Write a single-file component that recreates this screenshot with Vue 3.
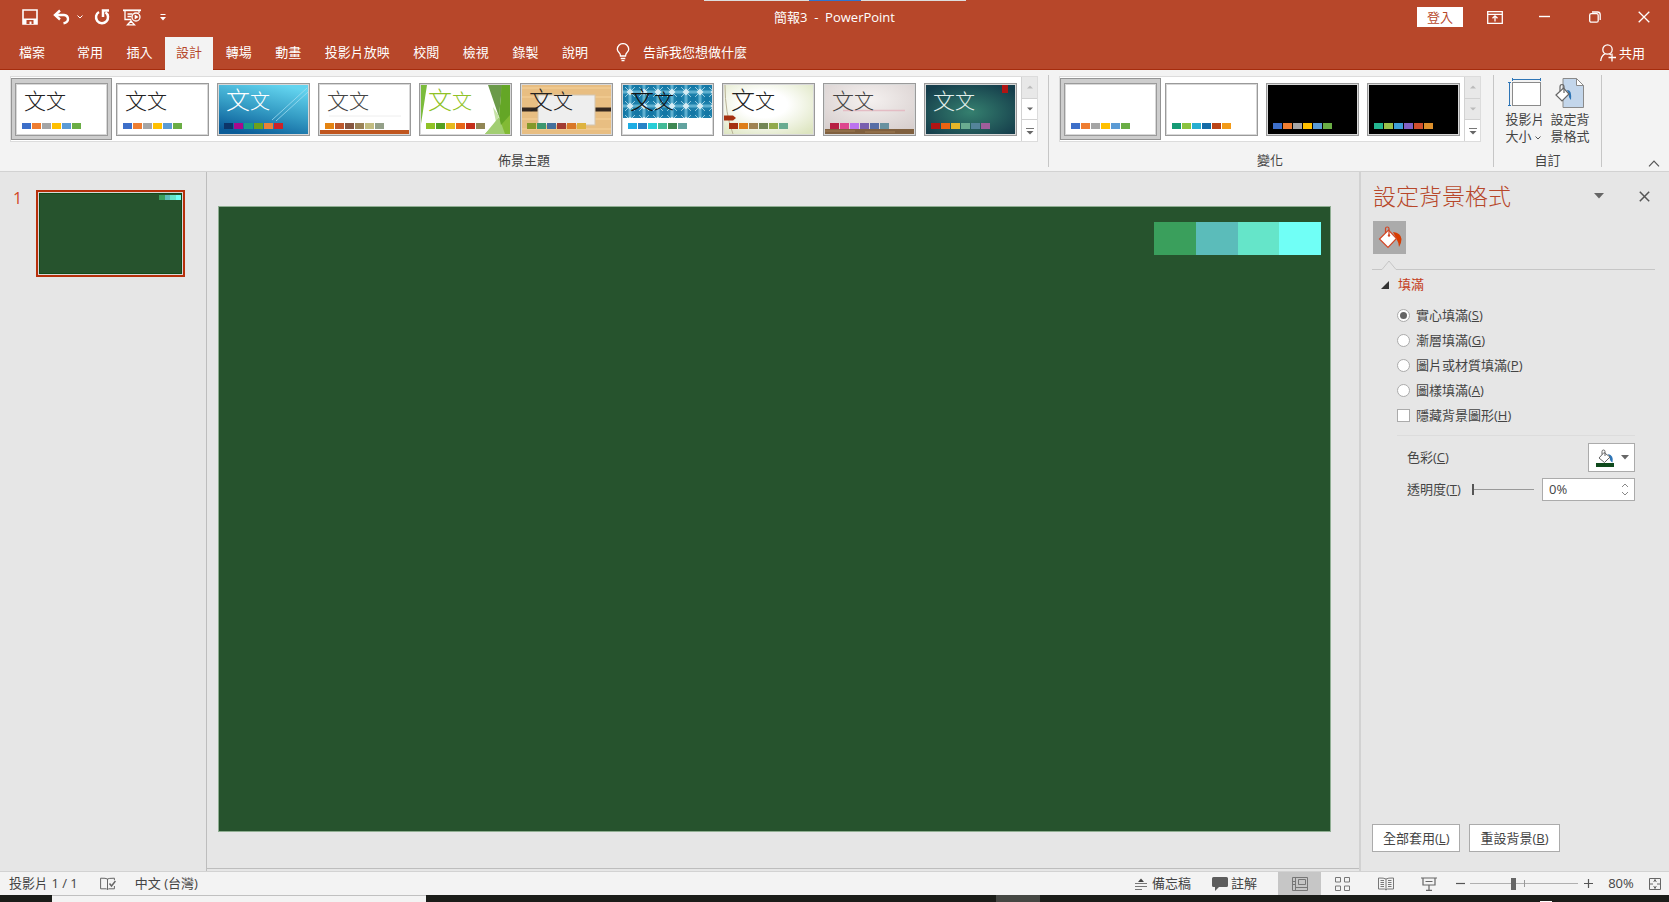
<script setup>
import { ref } from 'vue'

const tabs = ['常用', '插入', '設計', '轉場', '動畫', '投影片放映', '校閱', '檢視', '錄製', '說明']
const activeTab = ref('設計')

const office = ['#3d6fc9', '#ee7d31', '#a5a5a5', '#ffc000', '#5b9bd5', '#6aad45']
const themes = [
  { id: 'plain', ink: '#222', colors: office },
  { id: 'office', ink: '#222', colors: office },
  { id: 'blue', ink: '#fff', strong: true, colors: ['#0d3568', '#a80a8c', '#1a9c86', '#6da01c', '#ea8138', '#cc2229'] },
  { id: 'retro', ink: '#444', colors: ['#e48312', '#bd582c', '#865640', '#9b8357', '#c2bc80', '#94a088'] },
  { id: 'facet', ink: '#90c226', strong: true, colors: ['#90c226', '#54a021', '#e6b91e', '#e76618', '#c42f1a', '#918655'] },
  { id: 'wood', ink: '#222', strong: true, colors: ['#83992a', '#3c9770', '#44709d', '#a23c33', '#d97828', '#deb340'] },
  { id: 'tiles', ink: '#111', strong: true, colors: ['#1cade4', '#2683c6', '#27ced7', '#42ba97', '#3e8853', '#62a39f'] },
  { id: 'wisp', ink: '#222', strong: true, colors: ['#a53010', '#de7e18', '#9f8351', '#728653', '#92aa4c', '#6aac91'] },
  { id: 'gallery', ink: '#444', colors: ['#b71e42', '#de478e', '#bc72f0', '#795faf', '#586ea6', '#6892a0'] },
  { id: 'ion', ink: '#e3efec', colors: ['#b01513', '#ea6312', '#e6b729', '#6aac90', '#54849a', '#9e5e9b'] }
]
const selectedTheme = ref(0)

const variants = [
  { id: 'light', colors: office },
  { id: 'light', colors: ['#159a74', '#8ac33f', '#26aed0', '#136ba8', '#ba4316', '#f39a17'] },
  { id: 'dark', colors: office },
  { id: 'dark', colors: ['#23b590', '#9cc049', '#3f9fd8', '#8261c4', '#d04f2e', '#dd902c'] }
]
const selectedVariant = ref(0)

const slideColors = ['#3a9f5c', '#5bbcba', '#65e5c9', '#70fff6']

const fills = [
  { id: 'solid', label: '實心填滿', key: 'S' },
  { id: 'gradient', label: '漸層填滿', key: 'G' },
  { id: 'picture', label: '圖片或材質填滿', key: 'P' },
  { id: 'pattern', label: '圖樣填滿', key: 'A' }
]
const fill = ref('solid')
const hideShapes = ref(false)
const transparency = ref(0)
const zoom = ref(40)
</script>

<template>
  <div class="app">
    <header class="titlebar">
      <div class="quick">
        <button class="icon-btn save" aria-label="儲存">
          <svg width="16" height="16" viewBox="0 0 16 16"><path d="M1 1h14v14H1z" fill="none" stroke="#fff" stroke-width="1.6" /><path d="M1 9.5h14V15H1z" fill="#fff" /><path d="M4.500 11h7v4h-2v-2.500h-2V15h-3z" fill="#b7472a" /></svg>
        </button>
        <button class="icon-btn undo" aria-label="復原">
          <svg width="17" height="16" viewBox="0 0 17 16"><path d="M2 6h9q4 .5 4 4t-4.500 4.300" fill="none" stroke="#fff" stroke-width="2.400" /><path d="M7 1.500L2 6l5 4.500" fill="none" stroke="#fff" stroke-width="2.400" /></svg>
        </button>
        <button class="icon-btn undo-menu" aria-label="復原清單">
          <svg width="6" height="4" viewBox="0 0 6 4"><path d="M.5.5L3 3 5.500.5" fill="none" stroke="#fff" /></svg>
        </button>
        <button class="icon-btn redo" aria-label="重複">
          <svg width="16" height="16" viewBox="0 0 16 16"><path d="M5 3A6 6 0 1 0 11.500 3.300" fill="none" stroke="#fff" stroke-width="2.500" /><path d="M9 8V1.500h6" fill="none" stroke="#fff" stroke-width="2.500" /></svg>
        </button>
        <button class="icon-btn show" aria-label="從首張投影片">
          <svg width="18" height="17" viewBox="0 0 18 17"><g fill="none" stroke="#fff" stroke-width="1.300"><path d="M0 1.300h18" stroke-width="1.800" /><path d="M2 2v8.500h6M16 2v2M4.500 5h5M4.500 7.500h4" /><circle cx="13" cy="8" r="4" /><path d="M8 10.500V13M4.500 15.800L8 12l3.500 3.800z" /></g><path d="M11.700 5.500l3.800 2.500-3.800 2.500z" fill="#fff" /></svg>
        </button>
        <button class="icon-btn customize" aria-label="自訂快速存取工具列">
          <svg width="6" height="8" viewBox="0 0 6 8"><path d="M.5 1.500h5" stroke="#fff" /><path d="M0 4h6L3 7.500z" fill="#fff" /></svg>
        </button>
      </div>
      <h1>簡報3&nbsp; -&nbsp; PowerPoint</h1>
      <div class="window">
        <button class="signin">登入</button>
        <button class="icon-btn wb wopt" aria-label="功能區顯示選項">
          <svg width="16" height="13" viewBox="0 0 16 13"><g fill="none" stroke="#fff"><path d="M.7.700h14.600v11.600H.700zM1 3.300h14" stroke-width="1.300" /><path d="M8 10.500V5M5.500 7.300L8 4.800l2.500 2.500" stroke-width="1.300" /></g></svg>
        </button>
        <button class="icon-btn wb wmin" aria-label="最小化">
          <svg width="12" height="12" viewBox="0 0 12 12"><path d="M0 5.500h11" stroke="#fff" stroke-width="1.400" /></svg>
        </button>
        <button class="icon-btn wb wres" aria-label="還原">
          <svg width="12" height="12" viewBox="0 0 12 12"><g fill="none" stroke="#fff" stroke-width="1.300"><rect x=".7" y="2.700" width="8.500" height="8.500" rx="1.500" /><path d="M3 1h5.500q2.700 0 2.700 2.700V9" /></g></svg>
        </button>
        <button class="icon-btn wb wclose" aria-label="關閉">
          <svg width="12" height="12" viewBox="0 0 12 12"><path d="M.7.700l10.600 10.600M11.300.700L.700 11.300" stroke="#fff" stroke-width="1.300" /></svg>
        </button>
      </div>
      <div class="peek"></div>
    </header>

    <nav class="tabbar">
      <button class="tab file">檔案</button>
      <div class="tabs">
        <button v-for="t in tabs" :key="t" class="tab" :class="{ active: t === activeTab }" @click="activeTab = t">{{ t }}</button>
      </div>
      <button class="tell">
        <svg width="14" height="19" viewBox="0 0 14 19"><g fill="none" stroke="#fff" stroke-width="1.300"><path d="M4.500 13q0-2-1.700-3.700A5.500 5.500 0 0 1 1.300 6.300a5.700 5.700 0 0 1 11.400 0q0 1.700-1.500 3T9.500 13z" /><path d="M4.700 15.500h4.600M5.500 17.700h3" /></g></svg>
        <span>告訴我您想做什麼</span>
      </button>
      <button class="share">
        <svg width="16" height="18" viewBox="0 0 16 18"><g fill="none" stroke="#fff" stroke-width="1.300"><circle cx="7.500" cy="5.500" r="4.700" /><path d="M.7 17q.5-5 4.300-7.200M9.500 10l1.500 1M12 9.500v8M8.500 13.500h7.500" /></g></svg>
        <span>共用</span>
      </button>
    </nav>

    <section class="ribbon">
      <div class="group themes">
        <div class="gallery">
          <button v-for="(t, i) in themes" :key="t.id" class="slot" :class="{ selected: i === selectedTheme }" :aria-label="'佈景主題 ' + (i + 1)" @click="selectedTheme = i">
            <span class="thumb">
              <svg v-if="t.id === 'blue'" class="art" viewBox="0 0 89 49"><defs><linearGradient id="gb" x1=".7" y1="0" x2=".3" y2="1"><stop offset="0" stop-color="#63d4ef" /><stop offset=".5" stop-color="#359dc5" /><stop offset="1" stop-color="#0a5c98" /></linearGradient></defs><rect width="89" height="49" fill="url(#gb)" /><path d="M88 3L53 35M89 7L57 36" stroke="#9fdcf0" stroke-width=".8" /></svg>
              <svg v-else-if="t.id === 'retro'" class="art" viewBox="0 0 89 49"><path d="M9 31h72" stroke="#eee" /><rect y="45" width="89" height="4" fill="#c0561f" /></svg>
              <svg v-else-if="t.id === 'facet'" class="art" viewBox="0 0 89 49"><path d="M0 0h6L0 39z" fill="#7bbb3c" /><path d="M80 0h9v49H64l16-16z" fill="#82ba35" /><path d="M67 0h14l-3 32z" fill="#6b9a4a" /><path d="M72 22l6 9-3 6z" fill="#c5e2a6" /><path d="M64 49l14-17 6 17z" fill="#a2ce73" /><path d="M81 0h8v30l-9 10-2-9z" fill="#64a626" /></svg>
              <svg v-else-if="t.id === 'wood'" class="art" viewBox="0 0 89 49"><rect width="89" height="49" fill="#e8be82" /><path d="M0 3h89M0 12h89M0 34h89M0 44h89" stroke="#efc88e" stroke-width="2" /><path d="M0 24.500h89" stroke="#342820" stroke-width="4" /><rect x="16" y="10" width="57" height="30" fill="#eee" stroke="#d3c5b0" /></svg>
              <svg v-else-if="t.id === 'tiles'" class="art" viewBox="0 0 89 49"><defs><pattern id="pt" width="14" height="14" patternUnits="userSpaceOnUse"><rect width="14" height="14" fill="#1c7fab" /><path d="M7 0v14M0 7h14" stroke="#5fb0d0" stroke-width="3" /><path d="M0 0l14 14M14 0L0 14" stroke="#9ccfe2" stroke-width="1" /><path d="M7 3.500L10.500 7 7 10.500 3.500 7z" fill="#d5ecf4" /><circle cx="0" cy="0" r="3" fill="#1477a5" /><circle cx="14" cy="0" r="3" fill="#1477a5" /><circle cx="0" cy="14" r="3" fill="#1477a5" /><circle cx="14" cy="14" r="3" fill="#1477a5" /></pattern></defs><rect width="89" height="33" fill="url(#pt)" /></svg>
              <svg v-else-if="t.id === 'wisp'" class="art" viewBox="0 0 89 49"><defs><radialGradient id="gw" cx=".45" cy=".4" r=".75"><stop offset=".35" stop-color="#fff" /><stop offset="1" stop-color="#dde5c0" /></radialGradient></defs><rect width="89" height="49" fill="url(#gw)" /><path d="M1 0q0 28 8 49" fill="none" stroke="#b9b397" /><path d="M0 30.500h9l3 2.500-3 2.500H0z" fill="#a53010" /></svg>
              <svg v-else-if="t.id === 'gallery'" class="art" viewBox="0 0 89 49"><defs><radialGradient id="gg" cx=".5" cy=".3" r=".8"><stop offset="0" stop-color="#f5f1f0" /><stop offset="1" stop-color="#d5cccb" /></radialGradient></defs><rect width="89" height="49" fill="url(#gg)" /><path d="M18 25.500h62" stroke="#e4bcc4" stroke-width="1.500" /><rect y="44" width="89" height="5" fill="#80603f" /><path d="M0 46h30M40 47h30" stroke="#a07c54" /></svg>
              <svg v-else-if="t.id === 'ion'" class="art" viewBox="0 0 89 49"><defs><radialGradient id="gi" cx=".5" cy=".55" r=".65"><stop offset="0" stop-color="#35806f" /><stop offset="1" stop-color="#153d4b" /></radialGradient></defs><rect width="89" height="49" fill="url(#gi)" /><rect x="76" width="6" height="8" fill="#b01513" /></svg>
              <span class="sample" :class="{ strong: t.strong }" :style="{ color: t.ink }"><b>文</b><i>文</i></span>
              <span class="dots"><span v-for="c in t.colors" :key="c" :style="{ background: c }"></span></span>
            </span>
          </button>
          <div class="scroller">
            <button disabled aria-label="上一列"><svg width="6" height="4" viewBox="0 0 6 4"><path d="M0 3.500h6L3 .5z" fill="#bbb" /></svg></button>
            <button aria-label="下一列"><svg width="6" height="4" viewBox="0 0 6 4"><path d="M0 .5h6L3 3.500z" fill="#666" /></svg></button>
            <button aria-label="更多佈景主題"><svg width="8" height="8" viewBox="0 0 8 8"><path d="M0 1.500h8" stroke="#777" /><path d="M.5 4h7L4 7.500z" fill="#666" /></svg></button>
          </div>
        </div>
        <h2>佈景主題</h2>
      </div>

      <div class="group variants">
        <div class="gallery">
          <button v-for="(v, i) in variants" :key="i" class="slot" :class="{ selected: i === selectedVariant }" :aria-label="'變化 ' + (i + 1)" @click="selectedVariant = i">
            <span class="thumb" :class="v.id">
              <span class="dots"><span v-for="c in v.colors" :key="c" :style="{ background: c }"></span></span>
            </span>
          </button>
          <div class="scroller">
            <button disabled aria-label="上一列"><svg width="6" height="4" viewBox="0 0 6 4"><path d="M0 3.500h6L3 .5z" fill="#bbb" /></svg></button>
            <button disabled aria-label="下一列"><svg width="6" height="4" viewBox="0 0 6 4"><path d="M0 .5h6L3 3.500z" fill="#bbb" /></svg></button>
            <button aria-label="更多變化"><svg width="8" height="8" viewBox="0 0 8 8"><path d="M0 1.500h8" stroke="#777" /><path d="M.5 4h7L4 7.500z" fill="#666" /></svg></button>
          </div>
        </div>
        <h2>變化</h2>
      </div>

      <div class="group custom">
        <div class="tools">
          <button class="tool">
            <svg width="34" height="30" viewBox="0 0 34 30"><rect x="4.500" y="4.500" width="28" height="23" fill="#fff" stroke="#8a8a8a" /><path d="M4 1.500h29M4.500 0v3M32.500 0v3M1.500 4v24M0 4.500h3M0 27.500h3" stroke="#2e75b6" fill="none" /></svg>
            <span>投影片<br>大小 <svg width="6" height="4" viewBox="0 0 6 4"><path d="M.5.5L3 3 5.500.5" fill="none" stroke="#555" /></svg></span>
          </button>
          <button class="tool">
            <svg width="30" height="30" viewBox="0 0 30 30"><path d="M8 .5h13.500l7 7v22H8z" fill="#c3d6eb" stroke="#8a8a8a" /><path d="M21.500.5v7h7z" fill="#fff" stroke="#8a8a8a" /><path d="M12 12q5-1 4 10-3-3-2-6z" fill="#2e75b6" /><path d="M1 17l7.500-7 5.500 6-7 7z" fill="#fff" stroke="#666" stroke-width="1.200" /><path d="M5 13V9q0-2.500 2-2.500T9 9v6" fill="none" stroke="#666" stroke-width="1.200" /></svg>
            <span>設定背<br>景格式</span>
          </button>
        </div>
        <h2>自訂</h2>
      </div>
      <button class="collapse icon-btn" aria-label="摺疊功能區"><svg width="12" height="7" viewBox="0 0 12 7"><path d="M1 6.300L6 1.200l5 5.100" fill="none" stroke="#555" stroke-width="1.200" /></svg></button>
    </section>

    <main class="work">
      <aside class="slides">
        <span class="num">1</span>
        <button class="mini" aria-label="投影片 1">
          <span class="mini-page"><span class="chips"><span v-for="c in slideColors" :key="c" :style="{ background: c }"></span></span></span>
        </button>
      </aside>
      <section class="canvas">
        <div class="slide"><div class="chips"><span v-for="c in slideColors" :key="c" :style="{ background: c }"></span></div></div>
      </section>
      <aside class="pane">
        <div class="pane-head">
          <h2>設定背景格式</h2>
          <button class="icon-btn" aria-label="工作窗格選項"><svg width="10" height="6" viewBox="0 0 10 6"><path d="M0 0h10L5 5.500z" fill="#666" /></svg></button>
          <button class="icon-btn" aria-label="關閉窗格"><svg width="11" height="11" viewBox="0 0 11 11"><path d="M.8.800l9.400 9.400M10.200.800L.800 10.200" stroke="#555" stroke-width="1.500" /></svg></button>
        </div>
        <button class="fill-tab" aria-label="填滿">
          <svg width="24" height="24" viewBox="0 0 24 24"><path d="M15 6q8 1 8.500 7 0 4-2.500 8-.5-5-2-7z" fill="#d83b01" /><path d="M1.500 13l9-9 8 8.500-8.500 9z" fill="#fff" stroke="#d24726" stroke-width="1.200" /><path d="M7.500 7V2.500Q7.500 1 9.200 1T11 2.500V9" fill="none" stroke="#d24726" stroke-width="1.200" /><circle cx="11" cy="9.500" r="1.200" fill="#d24726" /></svg>
        </button>
        <div class="notch"><svg width="24" height="10" viewBox="0 0 24 10"><path d="M0 9.500h10L17 1l7 8.500" fill="none" stroke="#c6c6c6" /></svg><span></span></div>
        <button class="section"><svg width="8" height="8" viewBox="0 0 8 8"><path d="M8 0v8H0z" fill="#333" /></svg>填滿</button>
        <div class="options">
          <label v-for="f in fills" :key="f.id"><input v-model="fill" type="radio" name="fill" :value="f.id"><span>{{ f.label }}(<u>{{ f.key }}</u>)</span></label>
          <label><input v-model="hideShapes" type="checkbox"><span>隱藏背景圖形(<u>H</u>)</span></label>
        </div>
        <div class="settings">
          <div class="row">
            <span id="color-label">色彩(<u>C</u>)</span>
            <button class="color" aria-labelledby="color-label">
              <svg width="18" height="18" viewBox="0 0 18 18"><path d="M12 5q6 1 4.500 8.500-2.500-1-3-5z" fill="#2e75b6" /><path d="M3 9l5-5.500 6 4.500-5.500 5.500z" fill="#fff" stroke="#666" /><path d="M6 5.500V2.500Q6 1 7.500 1T9 2.500V7" fill="none" stroke="#666" /><rect y="14" width="18" height="4" fill="#0f4a1c" /></svg>
              <svg width="8" height="5" viewBox="0 0 8 5"><path d="M0 0h8L4 4.500z" fill="#666" /></svg>
            </button>
          </div>
          <div class="row">
            <label for="alpha">透明度(<u>T</u>)</label>
            <input id="alpha-range" v-model="transparency" class="alpha" type="range" min="0" max="100" aria-label="透明度">
            <span class="spin">
              <input id="alpha" type="text" :value="transparency + '%'">
              <span class="steps">
                <button aria-label="增加" @click="transparency++"><svg width="8" height="5" viewBox="0 0 8 5"><path d="M1 4l3-3 3 3" fill="none" stroke="#888" /></svg></button>
                <button aria-label="減少" @click="transparency--"><svg width="8" height="5" viewBox="0 0 8 5"><path d="M1 1l3 3 3-3" fill="none" stroke="#888" /></svg></button>
              </span>
            </span>
          </div>
        </div>
        <div class="actions">
          <button>全部套用(<u>L</u>)</button>
          <button>重設背景(<u>B</u>)</button>
        </div>
      </aside>
    </main>

    <footer class="status">
      <span>投影片 1 / 1</span>
      <button class="icon-btn spell" aria-label="校對"><svg width="16" height="14" viewBox="0 0 16 14"><path d="M7.500 12.500V2Q6 1 .6 1.200v10.600h5.900l1 1 1-1h5.900V9M7.500 2q1-.8 6.900-.8v2" fill="none" stroke="#666" /><path d="M9.500 6.500l2 2.500L15.500 4" fill="none" stroke="#666" stroke-width="1.500" /></svg></button>
      <span class="lang">中文 (台灣)</span>
      <div class="status-right">
        <button class="note"><svg width="12" height="12" viewBox="0 0 12 12"><path d="M3 4l3-3.500L9 4z" fill="#444" /><path d="M0 5.500h12M0 8.500h12M0 11.500h7" stroke="#777" /></svg>備忘稿</button>
        <button class="comment"><svg width="16" height="14" viewBox="0 0 16 14"><path d="M1.500 0h13Q16 0 16 1.500v7q0 1.500-1.500 1.500H7l-4 4v-4H1.500Q0 10 0 8.500v-7Q0 0 1.500 0z" fill="#5c5c5c" /></svg>註解</button>
        <button class="view on" aria-label="標準模式"><svg width="16" height="14" viewBox="0 0 16 14"><g fill="none" stroke="#777"><path d="M.5.500h15v13H.5zM3.500 0v14M6.500 2.500h7v5h-7zM4 10.500h11" /><path d="M1 4.500h2M1 7.500h2" /></g></svg></button>
        <button class="view" aria-label="投影片瀏覽"><svg width="15" height="14" viewBox="0 0 15 14"><path d="M.5.500h5v4.500h-5zM9.500.500h5v4.500h-5zM.5 9h5v4.500h-5zM9.500 9h5v4.500h-5z" fill="none" stroke="#777" /></svg></button>
        <button class="view" aria-label="閱讀檢視"><svg width="16" height="14" viewBox="0 0 16 14"><path d="M8 13V2Q6 .8.500 1v11h6l1.500 1 1.500-1h6V1Q10 .8 8 2M2.500 3.500h3.500M2.500 5.500h3.500M2.500 7.500h3.500M2.500 9.500h3.500M10 3.500h3.500M10 5.500h3.500M10 7.500h3.500M10 9.500h3.500" fill="none" stroke="#777" /></svg></button>
        <button class="view" aria-label="投影片放映"><svg width="16" height="14" viewBox="0 0 16 14"><path d="M0 1h16M2 1v7h12V1M4.500 4.500h7M8 8v5M5 13.300h6" fill="none" stroke="#666" stroke-width="1.200" /></svg></button>
        <button class="icon-btn zoom-btn" aria-label="縮小"><svg width="9" height="9" viewBox="0 0 9 9"><path d="M0 4.500h9" stroke="#555" stroke-width="1.200" /></svg></button>
        <input v-model="zoom" class="zoom" type="range" min="0" max="100" aria-label="縮放">
        <button class="icon-btn zoom-btn" aria-label="放大"><svg width="9" height="9" viewBox="0 0 9 9"><path d="M0 4.500h9M4.500 0v9" stroke="#555" stroke-width="1.200" /></svg></button>
        <button class="percent">80%</button>
        <button class="icon-btn" aria-label="調整至視窗大小"><svg width="12" height="12" viewBox="0 0 12 12"><path d="M.5.500h11v11H.5zM6 0v4M6 8v4M0 6h4M8 6h4" fill="none" stroke="#666" /><path d="M4.500 3.500L6 2l1.500 1.500M4.500 8.500L6 10l1.500-1.500" fill="none" stroke="#666" /></svg></button>
      </div>
    </footer>
    <div class="taskbar"><span class="search"></span><span class="gap"></span><span class="running"></span><span class="tray"></span></div>
  </div>
</template>

<style>
html, body { margin: 0; background: #e6e6e6; }
</style>

<style scoped>
.app { display: flex; flex-direction: column; height: 100vh; overflow: hidden; background: #e6e6e6; color: #444; font: 13px/17px "Open Sans", "Noto Sans CJK TC", sans-serif; }
.app *, .app *::before { box-sizing: border-box; }
button { margin: 0; padding: 0; border: 0; background: none; color: inherit; font: inherit; white-space: nowrap; }
input { margin: 0; font: inherit; color: inherit; }
h1, h2 { margin: 0; font-size: 13px; font-weight: 400; line-height: 17px; }
svg { display: block; flex: none; }
u { text-underline-offset: 1px; }
.icon-btn { display: flex; align-items: center; justify-content: center; }

.titlebar { position: relative; display: grid; grid-template-columns: 1fr auto 1fr; align-items: center; height: 34px; flex: none; background: #b7472a; color: #fff; }
.quick { display: flex; align-items: center; padding-left: 22px; }
.undo { margin-left: 15px; }
.undo-menu { margin-left: 7px; }
.redo { margin-left: 11px; }
.show { margin-left: 13px; }
.customize { margin-left: 19px; }
.window { display: flex; align-items: center; justify-content: flex-end; padding-right: 19px; }
.signin { width: 46px; height: 20px; background: #fff; color: #b7472a; line-height: 18px; }
.wopt { margin-left: 24px; }
.wmin { margin-left: 36px; }
.wres { margin-left: 38px; }
.wclose { margin-left: 37px; }
.peek { position: absolute; top: 0; left: 50%; width: 262px; height: 1px; margin-left: -131px; background: linear-gradient(90deg, #ddd 40%, #2f74d0 40%, #2f74d0 60%, #ddd 60%); }

.tabbar { display: flex; align-items: stretch; height: 36px; flex: none; padding-top: 3px; background: #b7472a; color: #fff; border-bottom: 1px solid #a52c0d; }
.tab { padding: 0 11px 1px; }
.file { margin-left: 8px; }
.tabs { display: flex; justify-content: space-between; width: 533px; margin-left: 10px; }
.tab.active { margin-bottom: -1px; padding-bottom: 2px; background: #f3f3f3; color: #b7472a; }
.tell { display: flex; align-items: center; gap: 13px; margin-left: 17px; padding-bottom: 1px; }
.share { display: flex; align-items: center; gap: 3px; margin-left: auto; padding-right: 24px; }

.ribbon { position: relative; display: flex; height: 102px; flex: none; padding: 5px 0 4px; background: #f3f3f3; border-bottom: 1px solid #d2d2d2; }
.group { display: flex; flex-direction: column; align-items: center; padding: 1px 10px 0; border-right: 1px solid #c6c6c6; }
.variants { padding-right: 12px; }
.group h2 { margin-top: auto; margin-bottom: -2px; }
.gallery { display: flex; height: 66px; border: 1px solid #dcdcdc; background: #fff; }
.slot { width: 101px; height: 62px; margin: 1px 0; padding: 3px; border: 1px solid transparent; }
.slot.selected { background: #cdcdcd; border-color: #949494; }
.thumb { position: relative; display: flex; flex-direction: column; justify-content: space-between; width: 93px; height: 53px; padding: 2px 5px 6px; border: 1px solid #9a9a9a; background: #fff; text-align: left; outline: 1px solid #d8d8d8; outline-offset: -2px; }
.thumb.dark { background: #000; justify-content: flex-end; }
.thumb.light { justify-content: flex-end; }
.art { position: absolute; top: 1px; left: 1px; width: 89px; height: 49px; }
.sample { position: relative; display: flex; align-items: baseline; padding-left: 3px; line-height: 28px; }
.sample b { font-size: 22px; font-weight: 300; }
.sample i { font-size: 20px; font-weight: 300; font-style: normal; }
.sample.strong b { font-size: 24px; }
.dots { position: relative; display: flex; gap: 1px; padding-left: 1px; }
.dots span { width: 9px; height: 6px; }
.scroller { display: flex; flex-direction: column; width: 16px; border-left: 1px solid #d2d2d2; }
.scroller button { display: flex; flex: 1; align-items: center; justify-content: center; }
.scroller button + button { border-top: 1px solid #d2d2d2; }
.scroller button:disabled { background: #e8e8e8; }
.custom { width: 108px; }
.tools { display: flex; gap: 6px; padding-top: 2px; }
.tool { display: flex; flex-direction: column; align-items: center; gap: 3px; }
.tool span { text-align: left; }
.tool span svg { display: inline-block; vertical-align: middle; }
.collapse { position: absolute; right: 9px; bottom: 4px; }

.work { display: flex; flex: 1; min-height: 0; }
.slides { display: flex; align-items: flex-start; width: 207px; flex: none; padding: 18px 0 0 13px; border-right: 1px solid #bdbdbd; }
.num { width: 23px; color: #d24726; font-size: 16px; line-height: 16px; }
.mini { width: 149px; height: 87px; border: 2px solid #b7300b; padding: 1px; background: #d8d8d8; }
.mini-page { position: relative; display: flex; justify-content: flex-end; height: 100%; padding-top: 1px; background: #26532d; border: 1px solid #124a18; }
.mini .chips { width: 22px; height: 5px; }
.chips { display: flex; }
.chips span { flex: 1; }
.canvas { flex: 1; min-width: 0; padding: 34px 28px 0 11px; border-bottom: 1px solid #bdbdbd; margin-bottom: 2px; }
.slide { display: flex; justify-content: flex-end; aspect-ratio: 1113 / 626; padding: 15px 9px; background: #26532d; border: 1px solid #8fae92; }
.slide .chips { width: 167px; height: 33px; }
.pane { display: flex; flex-direction: column; width: 310px; flex: none; padding: 9px 14px 19px 12px; border-left: 2px solid #d2d2d2; }
.pane-head { display: flex; align-items: center; height: 30px; padding-right: 5px; gap: 35px; }
.pane-head h2 { flex: 1; color: #b7472a; font-size: 23px; font-weight: 300; line-height: 30px; }
.fill-tab { display: flex; align-items: center; justify-content: center; width: 33px; height: 33px; margin-top: 10px; background: #ababab; }
.notch { display: flex; align-items: flex-end; margin-top: 6px; }
.notch svg { margin-left: -1px; }
.notch span { flex: 1; height: 1px; background: #c6c6c6; }
.section { display: flex; align-items: center; gap: 9px; margin-top: 6px; padding-left: 8px; color: #c43e1c; }
.options { display: flex; flex-direction: column; gap: 8px; margin: 14px 20px 0 24px; padding-bottom: 11px; border-bottom: 1px solid #dcdcdc; }
.options label { display: flex; align-items: center; gap: 6px; }
.options input { appearance: none; display: flex; align-items: center; justify-content: center; width: 13px; height: 13px; border: 1px solid #ababab; background: #fff; }
.options input[type="radio"] { border-radius: 50%; }
.options input:checked::before { content: ""; width: 7px; height: 7px; border-radius: 50%; background: #666; }
.settings { display: flex; flex-direction: column; gap: 6px; margin: 7px 20px 0 34px; }
.row { display: flex; align-items: center; justify-content: space-between; }
.color { display: flex; align-items: center; justify-content: flex-end; gap: 7px; width: 47px; height: 29px; padding-right: 5px; border: 1px solid #ababab; background: #fff; }
.alpha { appearance: none; width: 62px; height: 12px; margin-left: 4px; background: linear-gradient(#999, #999) center / 100% 1px no-repeat; }
.alpha::-webkit-slider-thumb { appearance: none; width: 2px; height: 11px; background: #555; }
.spin { display: flex; width: 93px; height: 23px; border: 1px solid #ababab; background: #fff; }
.spin input { flex: 1; min-width: 0; padding: 0 6px; border: 0; background: none; }
.steps { display: flex; flex-direction: column; justify-content: space-evenly; padding-right: 5px; }
.actions { display: flex; gap: 9px; margin-top: auto; margin-left: -1px; }
.actions button { height: 28px; padding: 0 10px; border: 1px solid #ababab; background: #fff; }

.status { display: flex; align-items: center; height: 24px; flex: none; padding: 0 8px 0 9px; border-top: 1px solid #d2d2d2; background: #f3f3f3; }
.spell { margin-left: 22px; }
.lang { margin-left: 19px; }
.status-right { display: flex; align-items: center; align-self: stretch; margin-left: auto; }
.note, .comment { display: flex; align-items: center; gap: 5px; }
.comment { gap: 3px; margin: 0 21px; }
.view { display: flex; align-items: center; justify-content: center; align-self: stretch; width: 43px; }
.view.on { background: #c6c6c6; }
.zoom-btn { width: 20px; }
.zoom { appearance: none; width: 108px; height: 13px; background: linear-gradient(#999, #999) center / 1px 7px no-repeat, linear-gradient(#b0b0b0, #b0b0b0) center / 100% 1px no-repeat; }
.zoom::-webkit-slider-thumb { appearance: none; width: 5px; height: 12px; background: #666; }
.percent { width: 51px; padding-right: 5px; text-align: center; }
.taskbar { display: flex; height: 7px; flex: none; padding-left: 52px; background: #1b1d19; }
.search { width: 374px; border-top: 1px solid #c0c0c0; background: #f3f3f3; }
.gap { width: 570px; }
.running { width: 44px; background: #454743; }
.tray { align-self: flex-end; width: 12px; height: 1px; margin-left: 500px; background: #fff; }
</style>
